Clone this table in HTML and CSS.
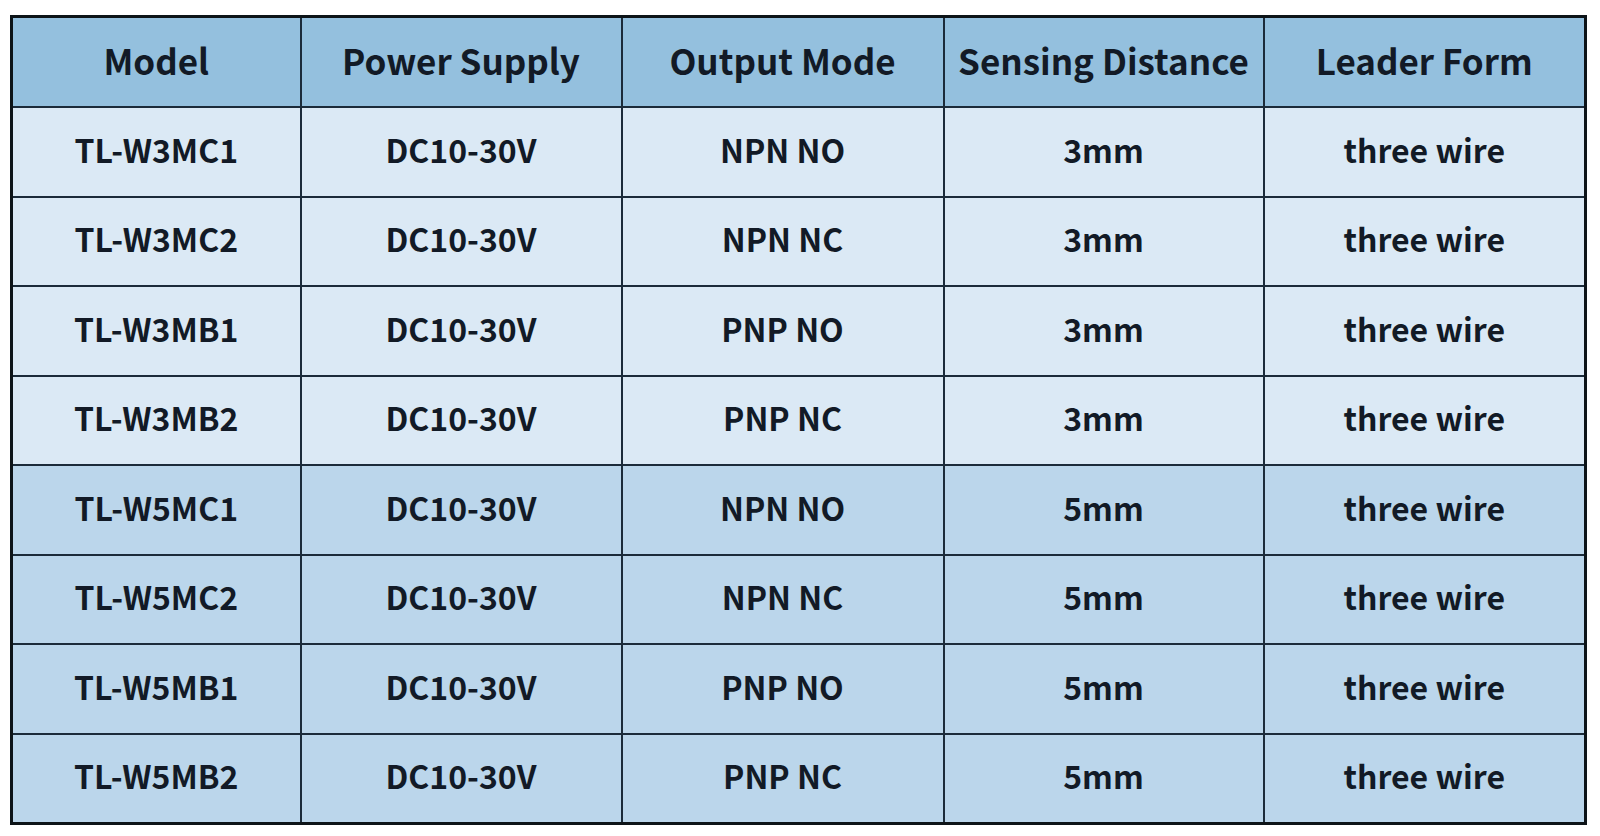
FILE: index.html
```html
<!DOCTYPE html>
<html>
<head>
<meta charset="utf-8">
<link rel="stylesheet" href="styles.css">
</head>
<body>
<table class="spec">
  <colgroup>
    <col class="c1"><col class="c2"><col class="c3"><col class="c4"><col class="c5">
  </colgroup>
  <thead>
    <tr><th>Model</th><th>Power Supply</th><th>Output Mode</th><th>Sensing Distance</th><th>Leader Form</th></tr>
  </thead>
  <tbody>
    <tr class="light"><td>TL-W3MC1</td><td>DC10-30V</td><td>NPN NO</td><td>3mm</td><td>three wire</td></tr>
    <tr class="light"><td>TL-W3MC2</td><td>DC10-30V</td><td>NPN NC</td><td>3mm</td><td>three wire</td></tr>
    <tr class="light"><td>TL-W3MB1</td><td>DC10-30V</td><td>PNP NO</td><td>3mm</td><td>three wire</td></tr>
    <tr class="light"><td>TL-W3MB2</td><td>DC10-30V</td><td>PNP NC</td><td>3mm</td><td>three wire</td></tr>
    <tr class="dark"><td>TL-W5MC1</td><td>DC10-30V</td><td>NPN NO</td><td>5mm</td><td>three wire</td></tr>
    <tr class="dark"><td>TL-W5MC2</td><td>DC10-30V</td><td>NPN NC</td><td>5mm</td><td>three wire</td></tr>
    <tr class="dark"><td>TL-W5MB1</td><td>DC10-30V</td><td>PNP NO</td><td>5mm</td><td>three wire</td></tr>
    <tr class="dark"><td>TL-W5MB2</td><td>DC10-30V</td><td>PNP NC</td><td>5mm</td><td>three wire</td></tr>
  </tbody>
</table>
</body>
</html>
```
FILE: styles.css
```css
html, body {
  margin: 0;
  padding: 0;
  background: #ffffff;
}
body {
  padding: 15px 0 0 10px;
  font-family: "Noto Sans CJK SC", "Noto Sans", sans-serif;
}
.spec {
  border-collapse: collapse;
  table-layout: fixed;
  width: 1574px;
  border: 3px solid #0d1418;
  color: #121a26;
}
.c1 { width: 289px; }
.c2 { width: 321px; }
.c3 { width: 322px; }
.c4 { width: 320px; }
.c5 { width: 322px; }
.spec th, .spec td {
  border: 2px solid #1b2b3a;
  text-align: center;
  vertical-align: middle;
  font-weight: 700;
  padding: 0 0 6px 0;
  white-space: nowrap;
}
.spec th {
  height: 82px;
  font-size: 35px;
  background: #94c0de;
}
.spec td {
  height: 81.5px;
  font-size: 32px;
}
.spec tr.light td { background: #dbe9f5; }
.spec tr.dark td { background: #bbd6eb; }
```
